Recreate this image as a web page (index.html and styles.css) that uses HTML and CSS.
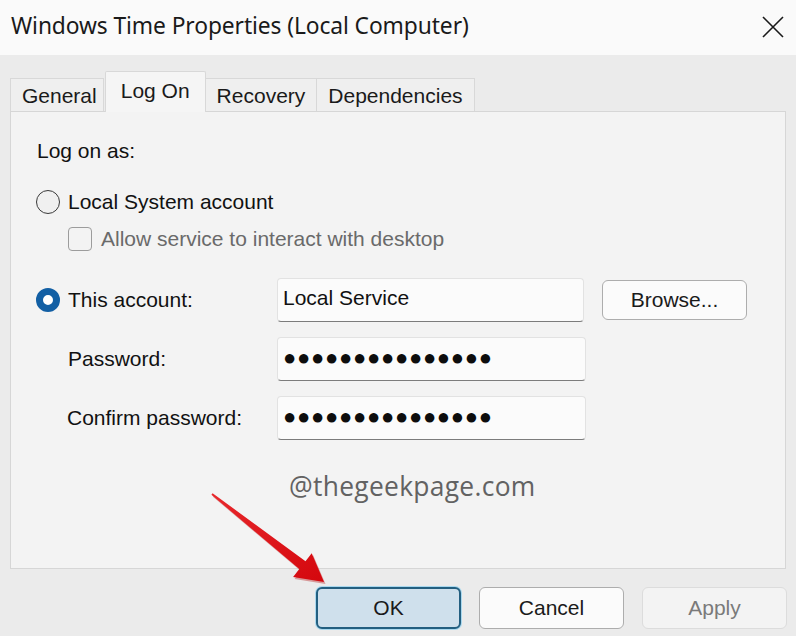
FILE: index.html
```html
<!DOCTYPE html>
<html>
<head>
<meta charset="utf-8">
<link rel="stylesheet" href="styles.css">
</head>
<body>
<div class="window">
  <header class="titlebar">
    <span class="title">Windows Time Properties (Local Computer)</span>
    <svg class="close" width="22" height="22" viewBox="0 0 22 22"><path d="M1 1 L21 21 M21 1 L1 21" stroke="#1a1a1a" stroke-width="1.6" fill="none"/></svg>
  </header>
  <div class="content">
    <nav class="tabs">
      <div class="tab tab-general">General</div>
      <div class="tab active">Log On</div>
      <div class="tab">Recovery</div>
      <div class="tab">Dependencies</div>
    </nav>
    <section class="panel">
      <div class="heading">Log on as:</div>
      <div class="option">
        <span class="radio"></span>
        <span>Local System account</span>
      </div>
      <div class="option check-row">
        <span class="checkbox"></span>
        <span class="muted">Allow service to interact with desktop</span>
      </div>
      <div class="account-grid">
        <div class="option">
          <span class="radio checked"></span>
          <span>This account:</span>
        </div>
        <div class="field field-short">Local Service</div>
        <div class="btn browse">Browse...</div>

        <div class="field-label">Password:</div>
        <div class="field dots">●●●●●●●●●●●●●●●</div>
        <div></div>

        <div class="field-label confirm">Confirm password:</div>
        <div class="field dots">●●●●●●●●●●●●●●●</div>
        <div></div>
      </div>
      <div class="watermark">@thegeekpage.com</div>
    </section>
    <footer class="actions">
      <div class="btn primary">OK</div>
      <div class="btn">Cancel</div>
      <div class="btn disabled">Apply</div>
    </footer>
  </div>
  <svg class="arrow" width="796" height="636" viewBox="0 0 796 636">
    <defs>
      <linearGradient id="ag" x1="0" y1="0" x2="1" y2="1">
        <stop offset="0" stop-color="#e8282c"/>
        <stop offset="1" stop-color="#d4070d"/>
      </linearGradient>
    </defs>
    <polygon points="211.4,494.8 299.3,569 293.1,576.9 324,582 311.7,553.3 305.5,561.2 212.6,493.2" fill="#b30000" opacity="0.35" transform="translate(1.5,2)"/>
    <polygon points="211.4,494.8 299.3,569 293.1,576.9 324,582 311.7,553.3 305.5,561.2 212.6,493.2" fill="url(#ag)"/>
  </svg>
</div>
</body>
</html>
```
FILE: styles.css
```css
html, body {
  margin: 0;
  padding: 0;
}
body {
  font-family: "Liberation Sans", Arial, sans-serif;
  font-size: 21px;
  color: #111;
}
.window {
  position: relative;
  width: 796px;
  height: 636px;
  background: #ebebeb;
  overflow: hidden;
}
.titlebar {
  height: 55px;
  box-sizing: border-box;
  background: #fafafa;
  display: flex;
  align-items: center;
  justify-content: space-between;
  padding: 0 12px 4px 11px;
}
.title {
  font-family: "Noto Sans", sans-serif;
  font-size: 22.8px;
  color: #1a1a1a;
  letter-spacing: -0.1px;
}
.close {
  display: block;
  margin-top: 2px;
}
.content {
  padding: 16px 10px 0 10px;
}
.tabs {
  display: flex;
  align-items: flex-end;
  height: 40px;
  position: relative;
  z-index: 1;
}
.tab {
  height: 33px;
  box-sizing: border-box;
  padding: 0 11px;
  border: 1px solid #d8d8d8;
  border-bottom: none;
  background: #efefef;
  display: flex;
  align-items: center;
  padding-top: 2px;
  color: #1a1a1a;
}
.tab-general {
  padding: 2px 6px 0 11px;
}
.tab + .tab {
  border-left: none;
}
.tab.active {
  height: 41px;
  margin-bottom: -1px;
  padding: 0 15px 2px 15px;
  margin-left: 1px;
  background: #f5f5f5;
  border-left: 1px solid #d8d8d8;
  border-right: 1px solid #d8d8d8;
  border-radius: 2px 2px 0 0;
}
.tab.active + .tab {
  border-left: none;
}
.panel {
  height: 458px;
  box-sizing: border-box;
  border: 1px solid #d6d6d6;
  background: #f3f3f3;
  padding: 27px 0 0 25px;
}
.heading {
  line-height: 24px;
  padding-left: 1px;
}
.option {
  display: flex;
  align-items: center;
  gap: 8px;
  height: 24px;
  line-height: 24px;
}
.heading + .option {
  margin-top: 27px;
}
.check-row {
  margin-top: 13px;
  padding-left: 32px;
  gap: 9px;
}
.radio {
  width: 24px;
  height: 24px;
  box-sizing: border-box;
  border-radius: 50%;
  border: 1.5px solid #3a3a3a;
  background: #f0f0f0;
  flex: none;
}
.radio.checked {
  border: 7.5px solid #125fa4;
  background: #ffffff;
}
.checkbox {
  width: 24px;
  height: 24px;
  box-sizing: border-box;
  border: 1.5px solid #9c9c9c;
  border-radius: 4px;
  background: #f3f3f3;
  flex: none;
}
.muted {
  color: #6a6a6a;
}
.account-grid {
  margin-top: 27px;
  display: grid;
  grid-template-columns: 225px 309px 145px;
  grid-auto-rows: 44px;
  column-gap: 16px;
  row-gap: 15px;
  align-items: center;
}
.account-grid .option {
  height: 44px;
}
.field-label {
  padding-left: 32px;
  line-height: 24px;
}
.field-label.confirm {
  padding-left: 31px;
}
.field {
  height: 44px;
  box-sizing: border-box;
  background: #fbfbfb;
  border: 1px solid #e2e2e2;
  border-bottom: 1.5px solid #7c7c7c;
  border-radius: 4px;
  padding: 0 0 4px 5px;
  display: flex;
  align-items: center;
}
.field-short {
  width: 307px;
}
.dots {
  font-size: 22px;
  letter-spacing: 0.7px;
  padding-bottom: 3px;
  color: #0d0d0d;
}
.btn {
  height: 40px;
  box-sizing: border-box;
  border: 1px solid #adadad;
  border-radius: 6px;
  background: #fbfbfb;
  display: flex;
  align-items: center;
  justify-content: center;
  color: #1a1a1a;
}
.browse {
  padding-bottom: 1px;
}
.watermark {
  margin: 28px 0 0 253px;
  font-family: "Open Sans", sans-serif;
  font-size: 26.4px;
  color: #626262;
  letter-spacing: 0.3px;
}
.actions {
  margin-top: 18px;
  display: flex;
  justify-content: flex-end;
  gap: 18px;
  margin-right: -1px;
}
.actions .btn {
  width: 145px;
  height: 42px;
}
.btn.primary {
  background: #cfe0ec;
  border: 2px solid #235f80;
  box-shadow: 0 0 0 1px #a9d8ee;
}
.btn.disabled {
  background: #f3f3f3;
  border-color: #dcdcdc;
  color: #7a7a7a;
}
.arrow {
  position: absolute;
  left: 0;
  top: 0;
  pointer-events: none;
}
```
